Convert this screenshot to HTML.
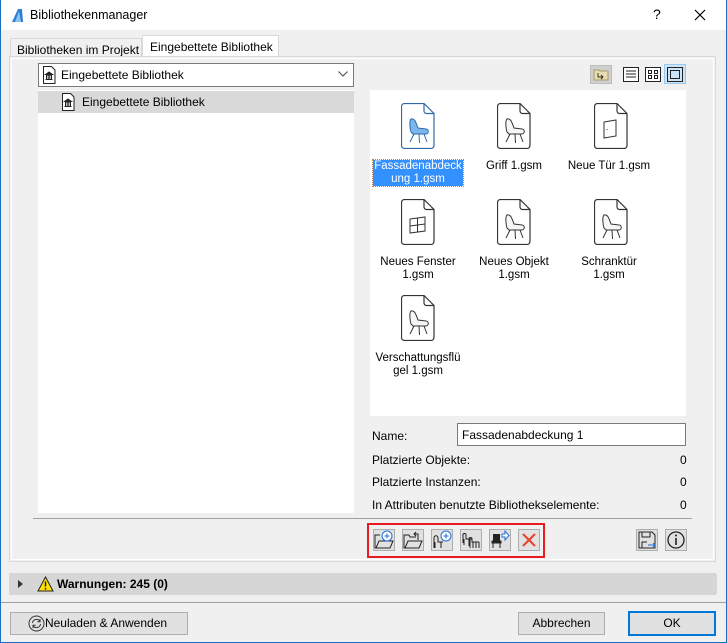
<!DOCTYPE html>
<html><head><meta charset="utf-8"><style>
*{box-sizing:border-box;margin:0;padding:0}
body{width:727px;height:643px;overflow:hidden;font-family:"Liberation Sans",sans-serif;font-size:12px;color:#000;background:#f0f0f0;position:relative}
.a{position:absolute}
.win{left:0;top:0;width:727px;height:643px;border:1px solid #1b6fc2;border-top:none}
.title{left:1px;top:0;width:725px;height:30px;background:#fff}
.btn{position:absolute;background:#e1e1e1;border:1px solid #adadad;text-align:center;line-height:21px;font-size:12px}
.tb{position:absolute;top:529px;width:22px;height:22px;background:#e1e1e1;border:1px solid #adadad}
.lbl{position:absolute;width:96px;text-align:center;font-size:11.5px;line-height:13px}
.ic{position:absolute;width:34px;height:46px}
</style></head><body>
<div class="a win"></div>
<div class="a title"></div>
<svg class="a" style="left:10px;top:7px" width="16" height="16" viewBox="0 0 16 16"><path d="M2 15 L8 2 L12 2 L13 15 Z" fill="#2a7fd4"/><path d="M5 15 L9 4 L11 15Z" fill="#8cc3f2"/></svg>
<div class="a" style="left:30px;top:8px;font-size:12.5px">Bibliothekenmanager</div>
<div class="a" style="left:653px;top:6px;font-size:14px">?</div>
<svg class="a" style="left:694px;top:9px" width="12" height="12"><path d="M1 1L11 11M11 1L1 11" stroke="#000" stroke-width="1.2"/></svg>

<div class="a" style="left:10px;top:38px;width:132px;height:19px;border:1px solid #d9d9d9;border-bottom:none;background:#f0f0f0;padding:4px 0 0 6px;font-size:12px">Bibliotheken im Projekt</div>
<div class="a" style="left:142px;top:35px;width:137px;height:22px;border:1px solid #d9d9d9;border-bottom:none;background:#fff;padding:4px 0 0 7px;font-size:12px">Eingebettete Bibliothek</div>
<div class="a" style="left:9px;top:56px;width:707px;height:506px;border:1px solid #d9d9d9;background:#f0f0f0"></div>
<div class="a" style="left:11px;top:58px;width:703px;height:502px;border:1px solid #fff"></div>

<div class="a" style="left:38px;top:63px;width:316px;height:24px;border:1px solid #7a7a7a;background:#fff"></div>
<svg class="a" style="left:42px;top:66px" width="14" height="18" viewBox="0 0 14 18"><path d="M1.5 .5H9.5L13 4V17.5H1.5Z" fill="#fff" stroke="#222"/><path d="M4 9H10M7 6L3.5 8.5H10.5Z M4.5 9V13M6.2 9V13M7.8 9V13M9.5 9V13M3.5 13.5H10.5" stroke="#222" fill="#222" stroke-width="1"/></svg>
<div class="a" style="left:61px;top:68px">Eingebettete Bibliothek</div>
<svg class="a" style="left:338px;top:71px" width="10" height="6"><path d="M.5 .5L5 5L9.5 .5" fill="none" stroke="#444"/></svg>

<div class="a" style="left:38px;top:90px;width:316px;height:423px;background:#fff"></div>
<div class="a" style="left:38px;top:91px;width:316px;height:22px;background:#d9d9d9"></div>
<svg class="a" style="left:61px;top:93px" width="14" height="18" viewBox="0 0 14 18"><path d="M1.5 .5H9.5L13 4V17.5H1.5Z" fill="#fff" stroke="#222"/><path d="M4 9H10M7 6L3.5 8.5H10.5Z M4.5 9V13M6.2 9V13M7.8 9V13M9.5 9V13M3.5 13.5H10.5" stroke="#222" fill="#222" stroke-width="1"/></svg>
<div class="a" style="left:82px;top:95px">Eingebettete Bibliothek</div>

<div class="a" style="left:590px;top:65px;width:22px;height:19px;background:#cfcfcf;border:1px solid #bdbdbd"></div>
<svg class="a" style="left:593px;top:67px" width="16" height="15"><path d="M1 3H6L7 4H15V13H1Z" fill="#e8dcb0" stroke="#a89a6a"/><path d="M5 6V10H10M8 8L10 10L8 12" fill="none" stroke="#333"/></svg>
<svg class="a" style="left:623px;top:67px" width="16" height="15"><rect x=".5" y=".5" width="15" height="14" fill="#fff" stroke="#222"/><path d="M3 4H13M3 7H13M3 10H13" stroke="#222"/></svg>
<svg class="a" style="left:645px;top:67px" width="16" height="15"><rect x=".5" y=".5" width="15" height="14" fill="#fff" stroke="#222"/><rect x="3.5" y="3.5" width="3" height="3" fill="none" stroke="#222"/><rect x="9.5" y="3.5" width="3" height="3" fill="none" stroke="#222"/><rect x="3.5" y="8.5" width="3" height="3" fill="none" stroke="#222"/><rect x="9.5" y="8.5" width="3" height="3" fill="none" stroke="#222"/></svg>
<div class="a" style="left:664px;top:64px;width:22px;height:20px;background:#cce4f7;border:1px solid #99c9ef"></div>
<svg class="a" style="left:667px;top:67px" width="16" height="15"><rect x=".5" y=".5" width="15" height="14" fill="none" stroke="#222"/><rect x="3.5" y="3.5" width="9" height="8" fill="none" stroke="#222"/></svg>

<div class="a" style="left:370px;top:90px;width:316px;height:326px;background:#fff"></div>

<svg class="ic" style="left:401px;top:103px" viewBox="0 0 34 46"><path d="M3.5 .5H23L33 10.5V42.5a3 3 0 0 1-3 3H3.5a3 3 0 0 1-3-3V3.5a3 3 0 0 1 3-3Z" fill="#fff" stroke="#2f6aa8" stroke-width="1.2"/><path d="M23 .5V8a2.5 2.5 0 0 0 2.5 2.5H33" fill="none" stroke="#2f6aa8" stroke-width="1.2"/><path d="M10 16C8 18 9 26 10 29L12 31H25C28 31 28 26 25 26L17 25C15 20 14 15 10 16Z" fill="#7db6ef" stroke="#2f6aa8"/><path d="M13 31L9 39M18 31L18.5 40M23 31L26 39" stroke="#2f6aa8"/></svg>
<div class="lbl" style="left:370px;top:160px;"><span style="background:#3390ff;color:#fff;outline:1px dotted #c08040;display:inline-block;padding:0 1px">Fassadenabdeck<br>ung 1.gsm</span></div>

<svg class="ic" style="left:497px;top:103px" viewBox="0 0 34 46"><path d="M3.5 .5H23L33 10.5V42.5a3 3 0 0 1-3 3H3.5a3 3 0 0 1-3-3V3.5a3 3 0 0 1 3-3Z" fill="#fff" stroke="#333" stroke-width="1.2"/><path d="M23 .5V8a2.5 2.5 0 0 0 2.5 2.5H33" fill="none" stroke="#333" stroke-width="1.2"/><path d="M10 16C8 18 9 26 10 29L12 31H25C28 31 28 26 25 26L17 25C15 20 14 15 10 16Z" fill="#f6f6f6" stroke="#333"/><path d="M13 31L9 39M18 31L18.5 40M23 31L26 39" stroke="#333"/></svg>
<div class="lbl" style="left:466px;top:160px">Griff 1.gsm</div>

<svg class="ic" style="left:594px;top:103px" viewBox="0 0 34 46"><path d="M3.5 .5H23L33 10.5V42.5a3 3 0 0 1-3 3H3.5a3 3 0 0 1-3-3V3.5a3 3 0 0 1 3-3Z" fill="#fff" stroke="#333" stroke-width="1.2"/><path d="M23 .5V8a2.5 2.5 0 0 0 2.5 2.5H33" fill="none" stroke="#333" stroke-width="1.2"/><path d="M10 19L22 17V33L10 35Z" fill="#fff" stroke="#333"/><path d="M13 26V27" stroke="#333"/></svg>
<div class="lbl" style="left:561px;top:160px">Neue Tür 1.gsm</div>

<svg class="ic" style="left:401px;top:199px" viewBox="0 0 34 46"><path d="M3.5 .5H23L33 10.5V42.5a3 3 0 0 1-3 3H3.5a3 3 0 0 1-3-3V3.5a3 3 0 0 1 3-3Z" fill="#fff" stroke="#333" stroke-width="1.2"/><path d="M23 .5V8a2.5 2.5 0 0 0 2.5 2.5H33" fill="none" stroke="#333" stroke-width="1.2"/><path d="M9 20L24 18V32L9 34Z M16.5 19V33 M9 27L24 25" fill="none" stroke="#333"/></svg>
<div class="lbl" style="left:370px;top:256px">Neues Fenster<br>1.gsm</div>

<svg class="ic" style="left:497px;top:199px" viewBox="0 0 34 46"><path d="M3.5 .5H23L33 10.5V42.5a3 3 0 0 1-3 3H3.5a3 3 0 0 1-3-3V3.5a3 3 0 0 1 3-3Z" fill="#fff" stroke="#333" stroke-width="1.2"/><path d="M23 .5V8a2.5 2.5 0 0 0 2.5 2.5H33" fill="none" stroke="#333" stroke-width="1.2"/><path d="M10 16C8 18 9 26 10 29L12 31H25C28 31 28 26 25 26L17 25C15 20 14 15 10 16Z" fill="#f6f6f6" stroke="#333"/><path d="M13 31L9 39M18 31L18.5 40M23 31L26 39" stroke="#333"/></svg>
<div class="lbl" style="left:466px;top:256px">Neues Objekt<br>1.gsm</div>

<svg class="ic" style="left:594px;top:199px" viewBox="0 0 34 46"><path d="M3.5 .5H23L33 10.5V42.5a3 3 0 0 1-3 3H3.5a3 3 0 0 1-3-3V3.5a3 3 0 0 1 3-3Z" fill="#fff" stroke="#333" stroke-width="1.2"/><path d="M23 .5V8a2.5 2.5 0 0 0 2.5 2.5H33" fill="none" stroke="#333" stroke-width="1.2"/><path d="M10 16C8 18 9 26 10 29L12 31H25C28 31 28 26 25 26L17 25C15 20 14 15 10 16Z" fill="#f6f6f6" stroke="#333"/><path d="M13 31L9 39M18 31L18.5 40M23 31L26 39" stroke="#333"/></svg>
<div class="lbl" style="left:561px;top:256px">Schranktür<br>1.gsm</div>

<svg class="ic" style="left:401px;top:295px" viewBox="0 0 34 46"><path d="M3.5 .5H23L33 10.5V42.5a3 3 0 0 1-3 3H3.5a3 3 0 0 1-3-3V3.5a3 3 0 0 1 3-3Z" fill="#fff" stroke="#333" stroke-width="1.2"/><path d="M23 .5V8a2.5 2.5 0 0 0 2.5 2.5H33" fill="none" stroke="#333" stroke-width="1.2"/><path d="M10 16C8 18 9 26 10 29L12 31H25C28 31 28 26 25 26L17 25C15 20 14 15 10 16Z" fill="#f6f6f6" stroke="#333"/><path d="M13 31L9 39M18 31L18.5 40M23 31L26 39" stroke="#333"/></svg>
<div class="lbl" style="left:370px;top:352px">Verschattungsflü<br>gel 1.gsm</div>

<div class="a" style="left:372px;top:429px">Name:</div>
<div class="a" style="left:457px;top:423px;width:229px;height:23px;border:1px solid #7a7a7a;background:#fff;padding:4px 0 0 4px">Fassadenabdeckung 1</div>
<div class="a" style="left:372px;top:453px">Platzierte Objekte:</div><div class="a" style="left:680px;top:453px">0</div>
<div class="a" style="left:372px;top:475px">Platzierte Instanzen:</div><div class="a" style="left:680px;top:475px">0</div>
<div class="a" style="left:372px;top:498px">In Attributen benutzte Bibliothekselemente:</div><div class="a" style="left:680px;top:498px">0</div>

<div class="a" style="left:33px;top:518px;width:659px;height:1px;background:#a0a0a0"></div>

<div class="a" style="left:367px;top:523px;width:178px;height:35px;border:2px solid #e81b23"></div>
<div class="tb" style="left:373px"><svg width="20" height="20"><path d="M1 8V18H16L19 11H5L2 18" fill="none" stroke="#222"/><path d="M1 8V5H6" fill="none" stroke="#222"/><circle cx="13" cy="6" r="5" fill="#fff" stroke="#1d6fd6"/><path d="M13 3.5V8.5M10.5 6H15.5" stroke="#1d6fd6"/></svg></div>
<div class="tb" style="left:402px"><svg width="20" height="20"><path d="M1 8V18H16L19 11H5L2 18M1 8V5H6L7 7H13" fill="none" stroke="#222"/><path d="M15 10V4H11M13 2L11 4L13 6" fill="none" stroke="#222"/></svg></div>
<div class="tb" style="left:431px"><svg width="20" height="20"><path d="M2 18V8C2 5 6 5 6 8V12H11M3 12V18M9 12V18" fill="none" stroke="#222"/><circle cx="14" cy="6" r="5" fill="#fff" stroke="#1d6fd6"/><path d="M14 3.5V8.5M11.5 6H16.5" stroke="#1d6fd6"/></svg></div>
<div class="tb" style="left:460px"><svg width="20" height="20"><path d="M2 13V5C2 3 5 3 5 5V9H11M3 9V15M9 9V15M8 16V9C8 7 11 7 11 9V12H18M9 13V18M12 12L12 18M15 12V18M18 12V18" fill="none" stroke="#222"/></svg></div>
<div class="tb" style="left:489px"><svg width="20" height="20"><path d="M3 4H10V11H3Z" fill="#222"/><path d="M2 11H11V13H2ZM3 13V18M10 13V18" stroke="#222" fill="#222"/><path d="M12 4H15V1L19 5.5L15 10V7H12Z" fill="#fff" stroke="#1d6fd6"/></svg></div>
<div class="tb" style="left:518px"><svg width="20" height="20"><path d="M4 4L16 16M16 4L4 16" stroke="#e8402a" stroke-width="2"/></svg></div>
<div class="tb" style="left:636px"><svg width="20" height="20"><path d="M2 2H15L18 5V18H2Z M5 2V7H13V2 M5 18V12H10" fill="none" stroke="#222"/><path d="M11 15H18M16 13L18 15L16 17" fill="none" stroke="#1d6fd6"/></svg></div>
<div class="tb" style="left:665px"><svg width="20" height="20"><circle cx="10" cy="10" r="8" fill="none" stroke="#222" stroke-width="1.3"/><path d="M10 8V15" stroke="#222" stroke-width="1.6"/><circle cx="10" cy="5.5" r="1" fill="#222"/></svg></div>

<div class="a" style="left:9px;top:573px;width:708px;height:22px;background:#d6d6d6;border-radius:2px"></div>
<svg class="a" style="left:18px;top:580px" width="5" height="8"><path d="M0 0L5 4L0 8Z" fill="#333"/></svg>
<svg class="a" style="left:37px;top:576px" width="17" height="16"><path d="M8.5 1L16 15H1Z" fill="#ffe000" stroke="#222"/><path d="M8.5 5.5V10.5" stroke="#222" stroke-width="1.5"/><circle cx="8.5" cy="12.7" r=".9" fill="#222"/></svg>
<div class="a" style="left:57px;top:577px;font-weight:bold">Warnungen: 245 (0)</div>
<div class="a" style="left:1px;top:602px;width:725px;height:1px;background:#a0a0a0"></div>

<div class="btn" style="left:10px;top:612px;width:178px;height:23px;padding-left:14px">Neuladen &amp; Anwenden</div>
<svg class="a" style="left:28px;top:615px" width="17" height="17"><circle cx="8.5" cy="8.5" r="7.5" fill="none" stroke="#333"/><path d="M4.5 8A4 4 0 0 1 12 6.5M12.5 9A4 4 0 0 1 5 10.5M12 4V6.7H9.3M5 13V10.3H7.7" fill="none" stroke="#333"/></svg>
<div class="btn" style="left:518px;top:612px;width:87px;height:23px">Abbrechen</div>
<div class="btn" style="left:628px;top:611px;width:88px;height:25px;border:2px solid #0078d7;line-height:21px">OK</div>
</body></html>
